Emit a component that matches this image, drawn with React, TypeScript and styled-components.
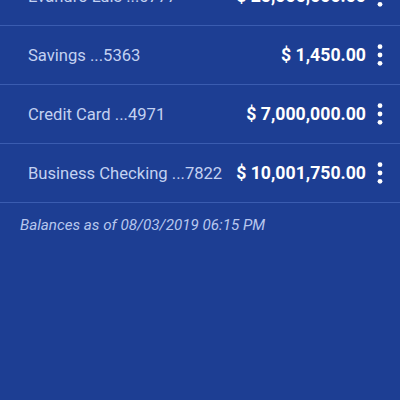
import React from "react";
import styled, { createGlobalStyle } from "styled-components";

const Global = createGlobalStyle`
  html, body { margin: 0; padding: 0; background: #1d3e93; }
  body { font-family: Roboto, "Liberation Sans", sans-serif; height: 400px; overflow: hidden; }
`;

const Screen = styled.div`
  width: 400px;
  height: 400px;
  background: #1d3e93;
  overflow: hidden;
`;

const List = styled.div`
  display: flex;
  flex-direction: column;
  margin-top: -33px;
`;

const Row = styled.div`
  display: flex;
  align-items: center;
  height: 58px;
  padding: 0 8px 0 28px;
  border-bottom: 1px solid #3a5cb0;
`;

const Label = styled.span`
  flex: 1;
  font-size: 16.6px;
  color: #c3d1f1;
  white-space: nowrap;
`;

const Amount = styled.span`
  font-size: 17.7px;
  font-weight: 700;
  color: #ffffff;
  white-space: nowrap;
`;

const MenuButton = styled.div`
  width: 24px;
  height: 30px;
  margin-left: 2px;
  display: flex;
  align-items: center;
  justify-content: center;
`;

const Footer = styled.div`
  padding: 13px 20px;
  font-size: 15.2px;
  font-style: italic;
  color: #b7c7ee;
`;

const Kebab = () => (
  <svg width="6" height="22" viewBox="0 0 6 22">
    <circle cx="3" cy="2.7" r="2.4" fill="#fff" />
    <circle cx="3" cy="11" r="2.4" fill="#fff" />
    <circle cx="3" cy="19.3" r="2.4" fill="#fff" />
  </svg>
);

const accounts = [
  { name: "Evandro Luis ...0777", amount: "$ 25,000,000.00" },
  { name: "Savings ...5363", amount: "$ 1,450.00" },
  { name: "Credit Card ...4971", amount: "$ 7,000,000.00" },
  { name: "Business Checking ...7822", amount: "$ 10,001,750.00" },
];

export default function App() {
  return (
    <Screen>
      <Global />
      <List>
        {accounts.map((a) => (
          <Row key={a.name}>
            <Label>{a.name}</Label>
            <Amount>{a.amount}</Amount>
            <MenuButton>
              <Kebab />
            </MenuButton>
          </Row>
        ))}
      </List>
      <Footer>Balances as of 08/03/2019 06:15 PM</Footer>
    </Screen>
  );
}
